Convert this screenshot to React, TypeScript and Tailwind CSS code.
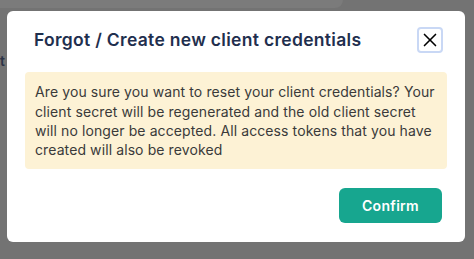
import { X } from "lucide-react";

const ResetCredentialsModal = () => {
  return (
    <div className="absolute left-[7px] top-[11px] flex h-[231px] w-[458px] flex-col rounded-md bg-white px-[18px] pt-[16px]">
      <div className="flex items-center justify-between">
        <h2 className="pl-[9px] text-[17.5px] font-semibold tracking-[0.3px] text-[#1f2f4e]">
          Forgot / Create new client credentials
        </h2>
        <button className="mr-[4px] flex h-[26px] w-[26px] items-center justify-center rounded-[4px] border-2 border-[#c9d8f5] text-black">
          <X size={22} strokeWidth={1.8} />
        </button>
      </div>

      <div className="mt-[19px] rounded-[4px] bg-[#fdf2d5] py-[10px] pl-[10px] pr-[6px] text-[14px] leading-[19.3px] tracking-[0.1px] text-[#3a3a3a]">
        Are you sure you want to reset your client credentials? Your client
        secret will be regenerated and the old client secret will no longer be
        accepted. All access tokens that you have created will also be revoked
      </div>

      <div className="mt-[19px] flex justify-end pr-[5px]">
        <button className="h-[35px] w-[103px] rounded-md bg-[#17a68f] text-[14px] font-semibold tracking-[0.3px] text-white">
          Confirm
        </button>
      </div>
    </div>
  );
};

export default function App() {
  return (
    <div
      className="relative h-[259px] w-[474px] overflow-hidden bg-[#737373]"
      style={{ fontFamily: "Inter, 'Noto Sans', sans-serif" }}
    >
      {/* page behind the overlay */}
      <div className="absolute left-[-10px] top-[-20px] h-[28px] w-[353px] rounded-lg bg-[#7b7b7b]" />
      <span className="absolute left-0 top-[50px] text-[14px] font-semibold text-[#2b3347]">
        t
      </span>

      <ResetCredentialsModal />
    </div>
  );
}
